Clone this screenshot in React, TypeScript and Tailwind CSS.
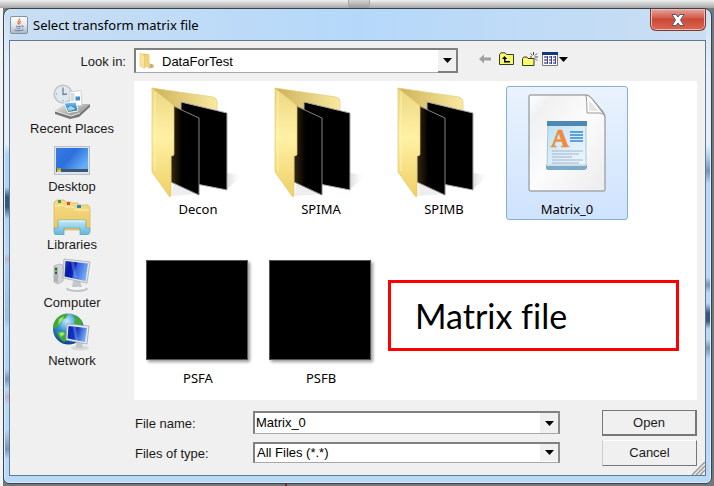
import React, { useId, useState } from "react";

const sunken =
  "border-2 border-b border-t-[#808080] border-l-[#808080] border-r-[#8c8c8c] border-b-[#a8a8a8] bg-white";

function DownArrow() {
  return (
    <svg viewBox="0 0 9 5" className="h-[5px] w-[9px]" aria-hidden="true">
      <path d="M0 0h9L4.500 5z" fill="#000" />
    </svg>
  );
}

const arrowFace =
  "flex items-center justify-center border-r-2 border-b-2 border-[#808080] bg-[#f0f0f0]";

function JavaIcon() {
  return (
    <svg viewBox="0 0 18 18" className="size-[18px]" aria-hidden="true">
      <defs>
        <linearGradient id="jv" x1="0" y1="0" x2="0" y2="1">
          <stop offset="0" stopColor="#fff" />
          <stop offset=".5" stopColor="#e4e8ec" />
          <stop offset="1" stopColor="#a9b6c2" />
        </linearGradient>
      </defs>
      <rect x=".5" y=".5" width="17" height="17" rx="1.500" fill="url(#jv)" stroke="#7f93a6" />
      <path d="M9.500 2.500c.8 2-2 2.500-1.500 4.500.3.800.9.900.8 1.800M10.800 5c-1.300 1-1.500 1.500-.8 3" fill="none" stroke="#e2702d" strokeWidth="1.200" />
      <path d="M6 10c1.500.6 4 .6 5.500 0M6.500 12c1 .5 3 .5 4 0M12 9.800c1.600-.4 1.600 1.500 0 1.800M4.500 14c2 1 7 1 9-.3" fill="none" stroke="#5b7fa4" />
    </svg>
  );
}

function SmallFolder() {
  return (
    <svg viewBox="0 0 18 18" className="size-[18px]" aria-hidden="true">
      <path d="M11 11l5 2v2.500l-6 1z" fill="#c4c6c8" />
      <path d="M5 1.500l6 .8v12l-5 1z" fill="#e3c35a" />
      <path d="M6.500 3l5-.5V14l-5 2z" fill="#efd47c" />
      <path d="M2 1l4.500 2.500v13L2 14z" fill="#f8e59a" stroke="#e0c263" strokeWidth=".5" />
      <path d="M12 12l2.500.5v3l-2.500.5z" fill="#dba93e" />
    </svg>
  );
}

function BackIcon() {
  return (
    <svg viewBox="0 0 12 10" className="h-[10px] w-[12px]" aria-hidden="true">
      <path d="M0 5l5-4.500v3h7v3H5v3z" fill="#a0a0a0" />
    </svg>
  );
}

function UpIcon() {
  return (
    <svg viewBox="0 0 15 14" className="h-[14px] w-[15px]" aria-hidden="true">
      <path d="M.5 12.500v-10L2 .8h4l1.500 1.700h7v10z" fill="#f8f870" stroke="#3a3a20" />
      <path d="M5.500 4L3 7h2v3.500h6V9H6.500V7h1.700z" fill="#000" />
    </svg>
  );
}

function NewFolderIcon() {
  return (
    <svg viewBox="0 0 16 15" className="h-[15px] w-[16px]" aria-hidden="true">
      <path d="M.5 13.500v-7L1.800 5h3l1.200 1.500h6v7z" fill="#f8f870" stroke="#3a3a20" />
      <path d="M11.500 0v3M8.500 1.500l2 2M15 1.500l-2 2M12.500 5H16M13 6.500l2 2M8 5h2" stroke="#333" strokeWidth=".9" />
    </svg>
  );
}

function ViewIcon() {
  return (
    <svg viewBox="0 0 16 14" className="h-[14px] w-[16px]" aria-hidden="true">
      <path d="M.5.5h15v13H.5z" fill="#fff" stroke="#777" />
      <path d="M0 0h16v3H0z" fill="#103a80" />
      <path d="M2 4h3v2H2zM7 4h2v2H7zM11 4h2v2h-2zM2 7h3v2H2zM7 7h2v2H7zM11 7h2v2h-2zM2 10h3v2H2zM7 10h2v2H7zM11 10h2v2h-2z" fill="#8a8a98" />
      <path d="M5 4h1v8H5zM9 4h1v8H9zM13 4h1v8h-1z" fill="#3a3ab8" />
    </svg>
  );
}

function RecentIcon() {
  return (
    <svg viewBox="0 0 38 36" className="h-[36px] w-[38px]" aria-hidden="true">
      <defs>
        <linearGradient id="tray" x1="0" y1="0" x2="1" y2="1">
          <stop offset="0" stopColor="#eee" />
          <stop offset="1" stopColor="#777" />
        </linearGradient>
        <linearGradient id="ph" x1="0" y1="0" x2="0" y2="1">
          <stop offset="0" stopColor="#80c8f8" />
          <stop offset=".6" stopColor="#2583cf" />
          <stop offset="1" stopColor="#3b8a6b" />
        </linearGradient>
      </defs>
      <circle cx="10" cy="11" r="8.800" fill="#dfe9ee" stroke="#bcc6cb" strokeWidth="1.600" />
      <path d="M10 4.500V11.500L14 11" fill="none" stroke="#69829a" strokeWidth="1.300" />
      <path d="M3 11h1M10 17v1" stroke="#7e8d99" />
      <path d="M2 28l10-7h25l-9 8-2 3-8 2z" fill="url(#tray)" />
      <path d="M2 28l16 5 9-3 10-9v3L26 34l-9 2L2 31z" fill="#74797b" />
      <path d="M2 28l16 5 9-3" fill="none" stroke="#e8e8e8" />
      <path d="M16 9l12-1.500 1 15-12 1z" fill="#fff" stroke="#c3c8cc" strokeWidth=".8" />
      <path d="M17.500 11h4M17.500 13h4M17.500 15h4M17.500 17h4" stroke="#aeb7be" />
      <path d="M22.500 13.500h4.500v4h-4.500z" fill="#3c8fcd" />
      <path d="M11 20l12-1 2 9-10 1.500z" fill="url(#ph)" stroke="#f4f8fa" />
      <path d="M14 25l4-2 5 3-7 2z" fill="#fff" opacity=".6" />
    </svg>
  );
}

function DesktopIcon() {
  return (
    <svg viewBox="0 0 38 36" className="h-[36px] w-[38px]" aria-hidden="true">
      <defs>
        <linearGradient id="dk" x1="0" y1="0" x2="1" y2=".6">
          <stop offset="0" stopColor="#3a7ce2" />
          <stop offset=".5" stopColor="#2d6fdc" />
          <stop offset="1" stopColor="#64aef5" />
        </linearGradient>
      </defs>
      <path d="M1 5h36v29H1z" fill="#b5c1cf" />
      <path d="M2 6h34v27H2z" fill="#dce4ee" />
      <path d="M3 7h32v22H3z" fill="url(#dk)" />
      <path d="M3 28h32v3H3z" fill="#3c5674" />
      <path d="M4 27h2v2H4z" fill="#dd8932" />
      <path d="M6 27h2v2H6z" fill="#7ebd48" />
      <path d="M4 29h4v2H4z" fill="#dec54a" />
    </svg>
  );
}

function LibrariesIcon() {
  return (
    <svg viewBox="0 0 38 36" className="h-[36px] w-[38px]" aria-hidden="true">
      <defs>
        <linearGradient id="lb" x1="0" y1="0" x2="0" y2="1">
          <stop offset="0" stopColor="#f3dc8a" />
          <stop offset="1" stopColor="#edc65b" />
        </linearGradient>
        <linearGradient id="lbb" x1="0" y1="0" x2="0" y2="1">
          <stop offset="0" stopColor="#c5ebf3" />
          <stop offset="1" stopColor="#62b3d8" />
        </linearGradient>
      </defs>
      <path d="M1 31V3l3-2h7l2 2h5l2 1h5l2 2h8l2 2v23H1z" fill="url(#lb)" stroke="#d8b455" strokeWidth=".7" />
      <path d="M2 7l8-1 3 2h7l3 3h13" fill="none" stroke="#fff0b6" />
      <path d="M5 1h3v3H5z" fill="#28a450" />
      <path d="M14 3h3v3h-3z" fill="#d9482f" />
      <path d="M24 6h4v3h-4z" fill="#2785cf" />
      <path d="M1 33V29h4v-7q0-1 1-1h26q1 0 1 1v7h4v4q-1 3-3 3h-7v-7H11v7H4q-3 0-3-3z" fill="url(#lbb)" stroke="#5fa6ca" strokeWidth=".7" />
      <path d="M6 22h26" stroke="#e8fafc" />
    </svg>
  );
}

function ComputerIcon() {
  return (
    <svg viewBox="0 0 38 36" className="h-[36px] w-[38px]" aria-hidden="true">
      <defs>
        <linearGradient id="sc" x1="0" y1="0" x2="1" y2=".3">
          <stop offset="0" stopColor="#1a3fc8" />
          <stop offset=".3" stopColor="#0717a2" />
          <stop offset=".5" stopColor="#0f28b4" />
          <stop offset=".55" stopColor="#2f5ce0" />
          <stop offset="1" stopColor="#73a8f4" />
        </linearGradient>
      </defs>
      <ellipse cx="24" cy="32" rx="11" ry="3" fill="#c2c5c8" />
      <ellipse cx="24" cy="30.500" rx="9" ry="2.500" fill="#f5f5f5" />
      <path d="M1 9l5-2 4 1v16l-5 3-4-2z" fill="#d1d4d6" stroke="#a9aeb2" strokeWidth=".7" />
      <path d="M1 9l4 1v16l-4-2z" fill="#aeb2b5" />
      <path d="M2 11h2v6H2z" fill="#454d50" />
      <path d="M2 13h2v2H2z" fill="#5bc743" />
      <path d="M20 24h7l2 6h-10z" fill="#c4c8cb" />
      <path d="M11 2l26 3-3 21-24-5z" fill="#e5e8e9" stroke="#a5abae" strokeWidth=".8" />
      <path d="M12.500 4L35 6.500 32.500 24 11.500 19.500z" fill="url(#sc)" />
      <path d="M18 5l3 0 3 16-3 0z" fill="#a7c9ff" opacity=".3" />
    </svg>
  );
}

function NetworkIcon() {
  return (
    <svg viewBox="0 0 38 38" className="h-[38px] w-[38px]" aria-hidden="true">
      <defs>
        <radialGradient id="gl" cx=".45" cy=".25" r=".7">
          <stop offset="0" stopColor="#c5ecff" />
          <stop offset=".5" stopColor="#338ed3" />
          <stop offset="1" stopColor="#124a8d" />
        </radialGradient>
        <linearGradient id="ns" x1="0" y1="0" x2="1" y2=".3">
          <stop offset="0" stopColor="#0a28b5" />
          <stop offset=".5" stopColor="#1435be" />
          <stop offset="1" stopColor="#73a8f4" />
        </linearGradient>
      </defs>
      <circle cx="15.500" cy="16" r="15.500" fill="url(#gl)" />
      <path d="M4 5q6-5 11-4l-2 4-3 1-2 4-4 4-4 2q0-7 4-11zM19 2q8 1 11 8l-4 3-5-3 1-4zM4 19l6-1 5 4-1 5-3 2Q5 25 4 19z" fill="#43a935" />
      <path d="M6 6l5-3-2 5-4 4zM6 20l4-1 2 2-4 3z" fill="#a0e172" />
      <ellipse cx="27" cy="35" rx="9" ry="2.500" fill="#d8dbdd" />
      <path d="M23 29h6l1 6h-7z" fill="#c4c8cb" />
      <path d="M14 11l22 2-2 18-21-4z" fill="#e9ecee" stroke="#a0a6ab" strokeWidth=".8" />
      <path d="M15.500 13L34 15l-2 14-17.500-3.500z" fill="url(#ns)" />
      <path d="M20 14h3l2 13h-3z" fill="#a7c9ff" opacity=".3" />
    </svg>
  );
}

function FolderIcon() {
  return (
    <svg viewBox="0 0 94 112" className="h-[112px] w-[94px]" aria-hidden="true">
      <defs>
        <linearGradient id="ff" x1="0" y1="0" x2="0" y2="1">
          <stop offset="0" stopColor="#ecd781" />
          <stop offset=".45" stopColor="#fff1a5" />
          <stop offset="1" stopColor="#f0cf65" />
        </linearGradient>
        <linearGradient id="fb" x1="0" y1="0" x2="1" y2="0">
          <stop offset="0" stopColor="#cdb158" />
          <stop offset="1" stopColor="#fae9a0" />
        </linearGradient>
        <linearGradient id="bp" x1="0" y1="0" x2="1" y2="0">
          <stop offset="0" stopColor="#37290f" />
          <stop offset=".4" stopColor="#000" />
        </linearGradient>
        <linearGradient id="fs" x1="0" y1="0" x2="1" y2="0">
          <stop offset="0" stopColor="#ddd" />
          <stop offset="1" stopColor="#fff" stopOpacity="0" />
        </linearGradient>
      </defs>
      <path d="M76 86l17 2-17 14z" fill="url(#fs)" />
      <path d="M22 97l26 10-27 2z" fill="#eee" />
      <path d="M1 1l61 9q4 1 4 5v75l-40-2z" fill="url(#fb)" stroke="#e0cb7c" strokeWidth=".7" />
      <path d="M30 15l46 11v77l-46-9z" fill="#000" stroke="#aaa" />
      <path d="M20 18l28 13v77L20 95z" fill="url(#bp)" stroke="#858585" />
      <path d="M1 1l20 16q2 1 2 3v47q0 2-3 2v39q0 3-2 1L1 85z" fill="url(#ff)" stroke="#e2c86c" strokeWidth=".7" />
      <path d="M4 5v79" stroke="#fff5bc" strokeWidth=".8" />
    </svg>
  );
}

function DocumentIcon() {
  return (
    <svg viewBox="0 0 78 98" className="h-[98px] w-[78px]" aria-hidden="true">
      <defs>
        <linearGradient id="pg" x1="0" y1="0" x2="1" y2="1">
          <stop offset="0" stopColor="#fff" />
          <stop offset=".15" stopColor="#f1f1f1" />
          <stop offset=".5" stopColor="#fcfcfc" />
          <stop offset="1" stopColor="#ececec" />
        </linearGradient>
        <linearGradient id="wp" x1="0" y1="0" x2="1" y2="1">
          <stop offset="0" stopColor="#b9e1f2" />
          <stop offset=".5" stopColor="#d9edf7" />
          <stop offset="1" stopColor="#edf7fc" />
        </linearGradient>
      </defs>
      <path d="M3 1h54q4 0 7 4l11 13q2 3 2 6v71q0 2-2 2H3q-2 0-2-2V3q0-2 2-2z" fill="url(#pg)" stroke="#a5a8ab" strokeWidth="1.500" />
      <path d="M58 1q1 6 1 18h13q4 1 5 3L64 5q-3-4-6-4z" fill="#fff" stroke="#999" />
      <path d="M61 6v11h10z" fill="#e6e6e6" />
      <path d="M20 28h38v43H19z" fill="url(#wp)" stroke="#91b6cb" strokeWidth=".7" />
      <path d="M19 27h40v5H19z" fill="#4d87b4" />
      <path d="M18 71h41v3q-1 2-3 2H20q-2 0-2-2z" fill="#7faac5" />
      <path d="M19 70h39v2H19z" fill="#c9e2ee" />
      <text x="23" y="53" fill="#f08a3c" stroke="#f08a3c" strokeWidth=".6" fontFamily="Liberation Serif, serif" fontWeight="700" fontSize="25">A</text>
      <path d="M42 38h13M42 41h13M42 44h13M42 47h13" stroke="#609fdd" strokeWidth="1.800" />
      <path d="M24 57h31M24 60h27M24 63h20M24 66h31M24 69h27" stroke="#a6b4ca" />
    </svg>
  );
}

function Thumb() {
  return (
    <span className="mr-0.5 mb-1 block h-[100px] w-[102px] border border-[#555] bg-black shadow-[2px_2px_3px_#0006]" />
  );
}

const places = [
  { name: "Recent Places", icon: <RecentIcon /> },
  { name: "Desktop", icon: <DesktopIcon /> },
  { name: "Libraries", icon: <LibrariesIcon /> },
  { name: "Computer", icon: <ComputerIcon /> },
  { name: "Network", icon: <NetworkIcon /> },
];

const files = [
  { name: "Decon", icon: <FolderIcon /> },
  { name: "SPIMA", icon: <FolderIcon /> },
  { name: "SPIMB", icon: <FolderIcon /> },
  { name: "Matrix_0", icon: <DocumentIcon /> },
  { name: "PSFA", icon: <Thumb /> },
  { name: "PSFB", icon: <Thumb /> },
];

export default function App() {
  const id = useId();
  const [selected, setSelected] = useState("Matrix_0");
  const [fileName, setFileName] = useState("Matrix_0");

  return (
    <div className="flex min-h-screen flex-col bg-linear-to-r from-[#f4f4f4] from-[3px] to-[#777] to-[3px] font-['Liberation_Sans',Arial,sans-serif] text-[13px] leading-4 text-[#1a1a1a]">
      <div className="flex h-2 shrink-0 bg-linear-to-b from-[#f1f1f1] to-[#a8a8a8]">
        <span className="ml-[348px] w-[22px] border-x border-[#aaa] bg-linear-to-b from-[#d6d6d6] to-[#999]" />
      </div>
      <main className="mr-0.5 ml-[3px] flex flex-1 flex-col rounded-t-lg rounded-b-md border border-[#38424c] bg-[#b8daf9] bg-[linear-gradient(to_bottom,#c9def2_0,#e4f1fc_60px,#e4f1fc_135px,#b0d4f6_145px,#b0d4f6_178px,#35567f_188px,#35567f_198px,#b0d4f6_210px,#b8daf9_245px,#c0b4d0_250px,#b0d4f6_256px,#9dbfe2_310px,#b8daf9_320px,#b0d4f6_360px,#7795b4_370px,#b8daf9_380px,#c0b4d0_388px,#b8daf9_396px,#b8daf9_420px,#7795b4_440px,#b8daf9_450px),linear-gradient(to_bottom,#cadef2_0,#e4f1fc_60px,#e4f1fc_135px,#b8daf9_145px,#7795b4_162px,#b8daf9_175px,#b8daf9_268px,#7795b4_276px,#b8daf9_284px,#b8daf9_294px,#35567f_304px,#35567f_312px,#b8daf9_320px,#b8daf9_330px,#7795b4_339px,#b8daf9_350px)] bg-size-[5px_100%] bg-position-[left_top,right_top] bg-no-repeat px-[5px] pb-[7px] shadow-[inset_0_0_0_1px_#d9edff]">
        <header className="flex h-[31px] shrink-0 items-start bg-linear-to-r from-[#c9def2] via-[#b5d8fa] to-[#cadef2]">
          <span className="mt-[7px] ml-px">
            <JavaIcon />
          </span>
          <h1 className="mt-1.5 ml-[5px] font-['Noto_Sans','Open_Sans',sans-serif] text-[13px] leading-5 text-black">
            Select transform matrix file
          </h1>
          <button
            type="button"
            aria-label="Close"
            className="ml-auto flex h-[22px] w-[56px] items-center justify-center rounded-b-md border border-t-0 border-[#7c3833] bg-linear-to-b from-[#e5a79d] via-[#cc4a38] via-50% to-[#d9674f] shadow-[inset_0_0_0_1px_#f0b8ae]"
          >
            <svg viewBox="0 0 14 12" className="h-[12px] w-[14px]" aria-hidden="true">
              <path d="M1 .5h4L7 3l2-2.500h4L9.500 6l3.500 5.500H9L7 9l-2 2.500H1L4.500 6z" fill="#fff" stroke="#555b6b" />
            </svg>
          </button>
        </header>

        <div className="flex flex-1 flex-col border border-[#66798c] bg-[#f0f0f0]">
          <div className="flex h-10 shrink-0 items-start pt-[7px]">
            <label htmlFor={id + "look"} className="mt-1.5 w-[124px] shrink-0 pr-2 text-right">
              Look in:
            </label>
            <div className="relative w-[324px]">
              <select
                id={id + "look"}
                className={`h-[25px] w-full appearance-none pt-px pl-[26px] text-[13px] text-black ${sunken}`}
              >
                <option>DataForTest</option>
              </select>
              <span className="pointer-events-none absolute top-1 left-1">
                <SmallFolder />
              </span>
              <span className={`pointer-events-none absolute top-0.5 right-0 h-[23px] w-5 ${arrowFace}`}>
                <DownArrow />
              </span>
            </div>
            <div className="ml-[21px] flex h-[22px] items-center gap-2">
              <button type="button" aria-label="Back" className="flex">
                <BackIcon />
              </button>
              <button type="button" aria-label="Up one level" className="flex">
                <UpIcon />
              </button>
              <button type="button" aria-label="Create new folder" className="flex">
                <NewFolderIcon />
              </button>
              <button type="button" aria-label="View menu" className="-ml-1 flex items-center gap-px">
                <ViewIcon />
                <DownArrow />
              </button>
            </div>
          </div>

          <div className="flex flex-1 pr-2">
            <nav aria-label="Places" className="flex w-[124px] shrink-0 flex-col items-center gap-[2px]">
              {places.map((p) => (
                <button key={p.name} type="button" className="flex h-14 w-full flex-col items-center justify-end">
                  {p.icon}
                  <span className="mt-0.5">{p.name}</span>
                </button>
              ))}
            </nav>
            <section
              aria-label="Files"
              className="grid flex-1 grid-cols-[122px_122px_122px_122px_1fr] content-start gap-x-px gap-y-[35px] bg-white pt-[5px] pb-[11px] pl-[3px]"
            >
              {files.map((f) => (
                <button
                  key={f.name}
                  type="button"
                  aria-pressed={selected === f.name}
                  onClick={() => {
                    setSelected(f.name);
                    setFileName(f.name);
                  }}
                  className={`flex h-[134px] flex-col items-center rounded-[3px] border font-['Noto_Sans','Open_Sans',sans-serif] ${
                    f.name === "PSFA" ? "col-start-1" : ""
                  } ${
                    selected === f.name
                      ? "border-[#86aedd] bg-linear-to-b from-[#eaf3fe] to-[#cfe3fd]"
                      : "border-transparent"
                  }`}
                >
                  <span className="flex h-[113px] items-center">{f.icon}</span>
                  <span className="leading-5 text-black">{f.name}</span>
                </button>
              ))}
              <p className="col-span-3 mt-[25px] mr-[18px] ml-[5px] flex h-[71px] items-center border-3 border-[#fe0000] pl-6 font-['Lato',sans-serif] text-[34px] leading-10 text-black [font-variant-ligatures:none]">
                Matrix file
              </p>
            </section>
          </div>

          <form
            onSubmit={(e) => e.preventDefault()}
            className="flex h-[75px] shrink-0 pt-2.5 pl-[125px]"
          >
            <div className="flex w-[118px] shrink-0 flex-col gap-3.5 pt-1.5">
              <label htmlFor={id + "name"}>File name:</label>
              <label htmlFor={id + "type"}>Files of type:</label>
            </div>
            <div className="flex flex-1 flex-col gap-2 pt-px">
              <div className={`flex h-[23px] ${sunken}`}>
                <input
                  id={id + "name"}
                  value={fileName}
                  onChange={(e) => setFileName(e.target.value)}
                  className="min-w-0 flex-1 pl-px text-[13px] text-black outline-none"
                />
                <button type="button" aria-label="Recent file names" className="flex w-[18px] items-center justify-center bg-[#f0f0f0]">
                  <DownArrow />
                </button>
              </div>
              <div className="relative">
                <select
                  id={id + "type"}
                  className={`block h-[21px] w-full appearance-none pl-0.5 text-[13px] text-black ${sunken}`}
                >
                  <option>All Files (*.*)</option>
                </select>
                <span className="pointer-events-none absolute inset-y-0.5 right-0.5 flex w-[18px] items-center justify-center bg-[#f0f0f0]">
                  <DownArrow />
                </span>
              </div>
            </div>
            <div className="ml-[42px] flex w-[95px] shrink-0 flex-col gap-1">
              <button
                type="submit"
                className="h-[26px] border border-r-2 border-b-2 border-[#777] bg-[#f0f0f0]"
              >
                Open
              </button>
              <button
                type="button"
                className="h-[26px] border border-t-white border-r-[#777] border-b-[#777] border-l-[#ccc] bg-[#f0f0f0]"
              >
                Cancel
              </button>
            </div>
            <svg viewBox="0 0 13 13" className="-ml-[5px] size-[13px] shrink-0 self-end" aria-hidden="true">
              <path d="M0 13L13 0M4 13l9-9M8 13l5-5" stroke="#9c9c9c" strokeWidth="1.500" />
            </svg>
          </form>
        </div>
      </main>
      <div className="flex h-[3px] shrink-0">
        <span className="ml-[285px] w-0.5 bg-[#a01818]" />
      </div>
    </div>
  );
}
